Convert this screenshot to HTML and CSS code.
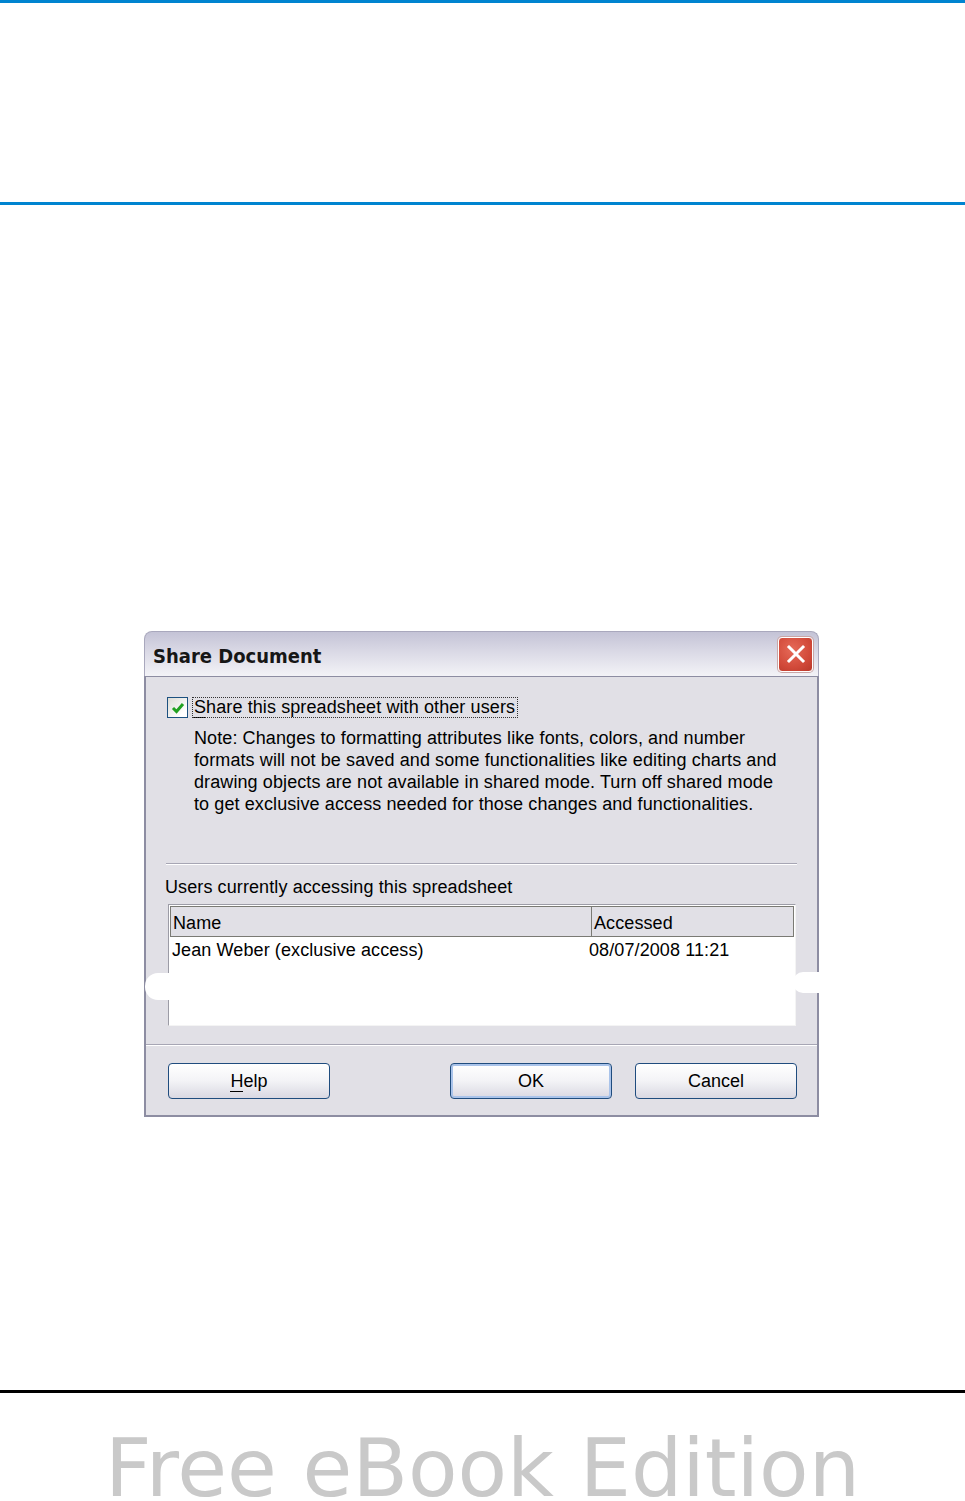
FILE: index.html
```html
<!DOCTYPE html>
<html lang="en">
<head>
  <meta charset="UTF-8" />
  <title>Share Document</title>
  <link rel="stylesheet" href="styles.css">
</head>
<body>
  <!-- Page header rules -->
  <div class="rule-blue"></div>
  <div class="header-space"></div>
  <div class="rule-blue"></div>

  <!-- Dialog screenshot -->
  <div class="dialog">
    <div class="titlebar">
      <span class="title">Share Document</span>
      <span class="close-btn">
        <svg width="22" height="22" viewBox="0 0 22 22">
          <path d="M4 4 L18 18 M18 4 L4 18" stroke="#fff" stroke-width="3" stroke-linecap="square"/>
        </svg>
      </span>
    </div>
    <div class="dialog-body">
      <div class="options">
        <label class="check-row">
          <span class="checkbox">
            <svg width="16" height="16" viewBox="0 0 16 16">
              <path d="M3 8 L6.5 11.5 L13 4" fill="none" stroke="#21a121" stroke-width="3"/>
            </svg>
          </span>
          <span class="check-label"><u>S</u>hare this spreadsheet with other users</span>
        </label>
        <p class="note">
          Note: Changes to formatting attributes like fonts, colors, and number<br>
          formats will not be saved and some functionalities like editing charts and<br>
          drawing objects are not available in shared mode. Turn off shared mode<br>
          to get exclusive access needed for those changes and functionalities.
        </p>
      </div>

      <div class="separator inset"></div>

      <div class="users">
        <div class="users-label">Users currently accessing this spreadsheet</div>
        <div class="user-table">
          <div class="table-head">
            <span class="col-name">Name</span>
            <span class="col-time">Accessed</span>
          </div>
          <div class="table-row">
            <span class="col-name">Jean Weber (exclusive access)</span>
            <span class="col-time">08/07/2008 11:21</span>
          </div>
        </div>
      </div>

      <div class="separator"></div>

      <div class="buttons">
        <button class="btn"><u>H</u>elp</button>
        <div class="btn-group">
          <button class="btn default">OK</button>
          <button class="btn">Cancel</button>
        </div>
      </div>
    </div>

    <!-- torn edges of the scan -->
    <span class="tear tear-left"></span>
    <span class="tear tear-right"></span>
  </div>

  <!-- Footer -->
  <footer class="footer">
    <div class="footer-text">Free eBook Edition</div>
  </footer>
</body>
</html>
```

FILE: styles.css
```css
/* Basic Reset */
* {
  margin: 0;
  padding: 0;
  box-sizing: border-box;
}

body {
  background: #fff;
  font-family: 'Liberation Sans', Arial, sans-serif;
  color: #000;
  width: 965px;
}

/* Header rules */
.rule-blue {
  height: 3px;
  background: #0084d0;
}

.header-space {
  height: 199px;
}

/* Dialog */
.dialog {
  position: relative;
  width: 675px;
  margin: 426px 0 0 144px;
}

.titlebar {
  height: 45px;
  display: flex;
  align-items: center;
  justify-content: space-between;
  padding: 0 5px 0 8px;
  border: 1px solid #a9a8bd;
  border-bottom: none;
  border-radius: 8px 8px 0 0;
  background: linear-gradient(to bottom, #c4c3d6 0%, #d8d7e4 40%, #f3f3f7 100%);
}

.title {
  font-family: 'DejaVu Sans Condensed', 'DejaVu Sans', sans-serif;
  font-weight: bold;
  font-size: 20px;
  color: #161616;
  margin-top: 4px;
}

.close-btn {
  width: 35px;
  height: 35px;
  display: flex;
  align-items: center;
  justify-content: center;
  border: 1px solid #fff;
  border-radius: 4px;
  background: radial-gradient(circle at 40% 35%, #e66a58 0%, #d24a3a 60%, #b8382a 100%);
  box-shadow: 0 0 0 1px #c9a6a6;
}

.dialog-body {
  background: #e1e0e6;
  border: 2px solid #8d8da2;
  border-top: 1px solid #8d8da2;
  font-size: 18px;
  letter-spacing: 0.1px;
}

.options {
  padding: 20px 22px 0 21px;
}

.check-row {
  display: flex;
  align-items: center;
  gap: 5px;
  height: 21px;
}

.checkbox {
  width: 21px;
  height: 21px;
  border: 1px solid #1c5180;
  background: linear-gradient(135deg, #dcdcd6 0%, #fff 80%);
  display: flex;
  align-items: center;
  justify-content: center;
}

.check-label {
  outline: 1px dotted #333;
  padding: 0 2px 0 1px;
  line-height: 19px;
}

.check-label u {
  text-decoration: none;
  border-bottom: 1px solid #000;
}

.note {
  margin-top: 9px;
  padding-left: 27px;
  line-height: 22px;
  white-space: nowrap;
}

.separator {
  height: 2px;
  border-top: 1px solid #a7a6b4;
  border-bottom: 1px solid #fff;
}

.separator.inset {
  margin: 48px 20px 0 20px;
}

.users {
  padding: 11px 21px 0 19px;
}

.users-label {
  line-height: 22px;
}

.user-table {
  margin: 6px 0 0 3px;
  height: 122px;
  background: #fff;
  border: 1px solid #9c9ca6;
  border-right-color: #f4f4f4;
  border-bottom-color: #f4f4f4;
  padding: 1px;
}

.table-head {
  display: flex;
  height: 31px;
  background: #e1e0e6;
  border: 1px solid #7a7a74;
}

.table-head span {
  display: flex;
  align-items: center;
  padding-left: 2px;
  padding-top: 3px;
}

.table-head .col-name {
  width: 421px;
  border-right: 1px solid #7a7a74;
}

.table-row {
  display: flex;
  height: 26px;
  align-items: center;
}

.table-row .col-name {
  width: 419px;
  padding-left: 2px;
}

.buttons {
  display: flex;
  justify-content: space-between;
  padding: 17px 20px 16px 22px;
}

.dialog-body > .separator:not(.inset) {
  margin-top: 18px;
}

.btn-group {
  display: flex;
  gap: 23px;
}

.btn {
  width: 162px;
  height: 36px;
  font-family: 'Liberation Sans', Arial, sans-serif;
  font-size: 18px;
  color: #000;
  border: 1px solid #1f4c7e;
  border-radius: 4px;
  background: linear-gradient(to bottom, #fff 0%, #f3f3f6 50%, #d9d8e2 100%);
}

.btn.default {
  box-shadow: inset 0 0 0 2px #a9c3ea;
}

.btn u {
  text-decoration: none;
  border-bottom: 1px solid #000;
}

/* white torn marks on the scan */
.tear {
  position: absolute;
  background: #fff;
}

.tear-left {
  left: 1px;
  top: 342px;
  width: 26px;
  height: 27px;
  border-radius: 13px 0 0 13px;
}

.tear-right {
  right: -2px;
  top: 341px;
  width: 28px;
  height: 21px;
  border-radius: 10px 0 0 10px;
}

/* Footer */
.footer {
  margin-top: 273px;
  border-top: 3px solid #000;
}

.footer-text {
  text-align: center;
  font-family: 'DejaVu Sans', sans-serif;
  font-size: 81px;
  color: #c9c9c9;
  line-height: 64px;
  padding-top: 43px;
  white-space: nowrap;
}
```
